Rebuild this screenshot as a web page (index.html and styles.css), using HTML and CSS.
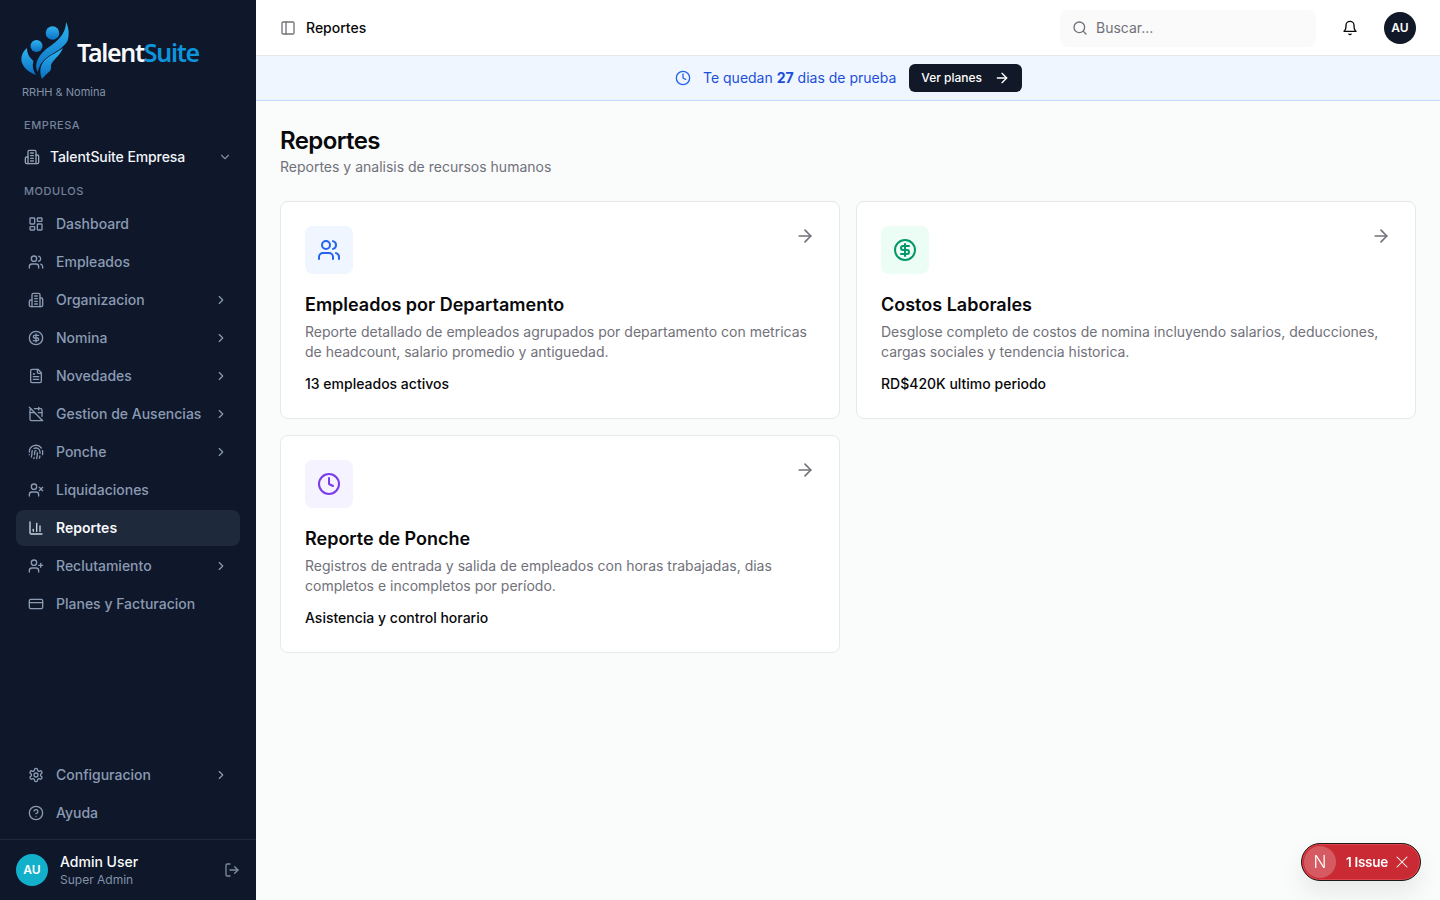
FILE: index.html
```html
<!DOCTYPE html>
<html lang="es">
<head>
  <meta charset="UTF-8">
  <meta name="viewport" content="width=device-width, initial-scale=1.0">
  <title>Reportes - TalentSuite</title>
  <link rel="stylesheet" href="styles.css">
</head>
<body>
  <!-- Icon sprite -->
  <svg class="sprite" xmlns="http://www.w3.org/2000/svg">
    <symbol id="i-dashboard" viewBox="0 0 24 24"><rect x="3" y="3" width="7" height="9" rx="1"/><rect x="14" y="3" width="7" height="5" rx="1"/><rect x="14" y="12" width="7" height="9" rx="1"/><rect x="3" y="16" width="7" height="5" rx="1"/></symbol>
    <symbol id="i-users" viewBox="0 0 24 24"><path d="M16 21v-2a4 4 0 0 0-4-4H6a4 4 0 0 0-4 4v2"/><circle cx="9" cy="7" r="4"/><path d="M22 21v-2a4 4 0 0 0-3-3.87"/><path d="M16 3.13a4 4 0 0 1 0 7.75"/></symbol>
    <symbol id="i-building" viewBox="0 0 24 24"><path d="M6 22V4a2 2 0 0 1 2-2h8a2 2 0 0 1 2 2v18Z"/><path d="M6 12H4a2 2 0 0 0-2 2v6a2 2 0 0 0 2 2h2"/><path d="M18 9h2a2 2 0 0 1 2 2v9a2 2 0 0 1-2 2h-2"/><path d="M10 6h4"/><path d="M10 10h4"/><path d="M10 14h4"/><path d="M10 18h4"/></symbol>
    <symbol id="i-dollar" viewBox="0 0 24 24"><circle cx="12" cy="12" r="10"/><path d="M16 8h-6a2 2 0 1 0 0 4h4a2 2 0 1 1 0 4H8"/><path d="M12 18V6"/></symbol>
    <symbol id="i-file" viewBox="0 0 24 24"><path d="M15 2H6a2 2 0 0 0-2 2v16a2 2 0 0 0 2 2h12a2 2 0 0 0 2-2V7Z"/><path d="M14 2v4a2 2 0 0 0 2 2h4"/><path d="M10 9H8"/><path d="M16 13H8"/><path d="M16 17H8"/></symbol>
    <symbol id="i-calendar-off" viewBox="0 0 24 24"><path d="M4.2 4.2A2 2 0 0 0 3 6v14a2 2 0 0 0 2 2h14a2 2 0 0 0 1.82-1.18"/><path d="M21 15.5V6a2 2 0 0 0-2-2H9.5"/><path d="M16 2v4"/><path d="M3 10h7"/><path d="M21 10h-5.5"/><path d="m2 2 20 20"/></symbol>
    <symbol id="i-fingerprint" viewBox="0 0 24 24"><path d="M12 10a2 2 0 0 0-2 2c0 1.02-.1 2.51-.26 4"/><path d="M14 13.12c0 2.38 0 6.38-1 8.88"/><path d="M17.29 21.02c.12-.6.43-2.3.5-3.02"/><path d="M2 12a10 10 0 0 1 18-6"/><path d="M2 16h.01"/><path d="M21.8 16c.2-2 .131-5.354 0-6"/><path d="M5 19.5C5.5 18 6 15 6 12a6 6 0 0 1 .34-2"/><path d="M8.65 22c.21-.66.45-1.32.57-2"/><path d="M9 6.8a6 6 0 0 1 9 5.2v2"/></symbol>
    <symbol id="i-user-x" viewBox="0 0 24 24"><path d="M16 21v-2a4 4 0 0 0-4-4H6a4 4 0 0 0-4 4v2"/><circle cx="9" cy="7" r="4"/><path d="m17 8 5 5"/><path d="m22 8-5 5"/></symbol>
    <symbol id="i-chart" viewBox="0 0 24 24"><path d="M3 3v16a2 2 0 0 0 2 2h16"/><path d="M18 17V9"/><path d="M13 17V5"/><path d="M8 17v-3"/></symbol>
    <symbol id="i-user-plus" viewBox="0 0 24 24"><path d="M16 21v-2a4 4 0 0 0-4-4H6a4 4 0 0 0-4 4v2"/><circle cx="9" cy="7" r="4"/><path d="M19 8v6"/><path d="M22 11h-6"/></symbol>
    <symbol id="i-card" viewBox="0 0 24 24"><rect x="2" y="5" width="20" height="14" rx="2"/><path d="M2 10h20"/></symbol>
    <symbol id="i-settings" viewBox="0 0 24 24"><path d="M12.22 2h-.44a2 2 0 0 0-2 2v.18a2 2 0 0 1-1 1.73l-.43.25a2 2 0 0 1-2 0l-.15-.08a2 2 0 0 0-2.73.73l-.22.38a2 2 0 0 0 .73 2.73l.15.1a2 2 0 0 1 1 1.72v.51a2 2 0 0 1-1 1.74l-.15.09a2 2 0 0 0-.73 2.73l.22.38a2 2 0 0 0 2.73.73l.15-.08a2 2 0 0 1 2 0l.43.25a2 2 0 0 1 1 1.73V20a2 2 0 0 0 2 2h.44a2 2 0 0 0 2-2v-.18a2 2 0 0 1 1-1.73l.43-.25a2 2 0 0 1 2 0l.15.08a2 2 0 0 0 2.73-.73l.22-.39a2 2 0 0 0-.73-2.73l-.15-.08a2 2 0 0 1-1-1.74v-.5a2 2 0 0 1 1-1.74l.15-.09a2 2 0 0 0 .73-2.73l-.22-.38a2 2 0 0 0-2.73-.73l-.15.08a2 2 0 0 1-2 0l-.43-.25a2 2 0 0 1-1-1.73V4a2 2 0 0 0-2-2z"/><circle cx="12" cy="12" r="3"/></symbol>
    <symbol id="i-help" viewBox="0 0 24 24"><circle cx="12" cy="12" r="10"/><path d="M9.09 9a3 3 0 0 1 5.83 1c0 2-3 3-3 3"/><path d="M12 17h.01"/></symbol>
    <symbol id="i-logout" viewBox="0 0 24 24"><path d="M9 21H5a2 2 0 0 1-2-2V5a2 2 0 0 1 2-2h4"/><path d="m16 17 5-5-5-5"/><path d="M21 12H9"/></symbol>
    <symbol id="i-panel" viewBox="0 0 24 24"><rect x="3" y="3" width="18" height="18" rx="2"/><path d="M9 3v18"/></symbol>
    <symbol id="i-search" viewBox="0 0 24 24"><circle cx="11" cy="11" r="8"/><path d="m21 21-4.3-4.3"/></symbol>
    <symbol id="i-bell" viewBox="0 0 24 24"><path d="M6 8a6 6 0 0 1 12 0c0 7 3 9 3 9H3s3-2 3-9"/><path d="M10.3 21a1.94 1.94 0 0 0 3.4 0"/></symbol>
    <symbol id="i-clock" viewBox="0 0 24 24"><circle cx="12" cy="12" r="10"/><path d="M12 6v6l4 2"/></symbol>
    <symbol id="i-arrow" viewBox="0 0 24 24"><path d="M5 12h14"/><path d="m12 5 7 7-7 7"/></symbol>
    <symbol id="i-right" viewBox="0 0 24 24"><path d="m9 18 6-6-6-6"/></symbol>
    <symbol id="i-down" viewBox="0 0 24 24"><path d="m6 9 6 6 6-6"/></symbol>
    <symbol id="i-x" viewBox="0 0 24 24"><path d="M18 6 6 18"/><path d="m6 6 12 12"/></symbol>
  </svg>

  <div class="app">
    <aside class="sidebar">
      <div class="brand">
        <div class="logo">
          <svg class="logo-mark" viewBox="20 21 52 60">
            <defs>
              <linearGradient id="logo-grad" x1="0" y1="0" x2="0" y2="1">
                <stop offset="0" stop-color="#2fb4f0"/>
                <stop offset="1" stop-color="#0a70c4"/>
              </linearGradient>
            </defs>
            <circle cx="52.5" cy="33" r="6.8" fill="url(#logo-grad)"/>
            <circle cx="36.5" cy="46" r="6" fill="url(#logo-grad)"/>
            <path fill="url(#logo-grad)" d="M27 48C21 53 20 60 23 65C26 71 32 73 36 75C33 70 32 66 33.500 61C30 58 27 54 27 48Z"/>
            <path fill="url(#logo-grad)" d="M66 22C66 31 61 38 53 44C46 49 39 54 36.500 63C35.500 67 36.500 70 38 72C39 64 45 58 52 54C58 50.500 64 47 67.500 41C69.500 35 69 28 66 22Z"/>
            <path fill="url(#logo-grad)" d="M63 48C58 52 50 55 45 60C40 65 39 72 42 79C44 76 47 74 50 71C52 68 50 66 52 63C55 58.500 60 55 63 48Z"/>
          </svg>
          <span class="logo-text">Talent<span class="logo-accent">Suite</span></span>
        </div>
        <p class="brand-sub">RRHH &amp; Nomina</p>
      </div>

      <div class="section-label section-empresa">EMPRESA</div>
      <div class="company">
        <svg class="icon"><use href="#i-building"/></svg>
        <span class="company-name">TalentSuite Empresa</span>
        <svg class="chev"><use href="#i-down"/></svg>
      </div>

      <div class="section-label section-modulos">MODULOS</div>
      <nav class="nav">
        <a class="nav-item"><svg class="icon"><use href="#i-dashboard"/></svg><span>Dashboard</span></a>
        <a class="nav-item"><svg class="icon"><use href="#i-users"/></svg><span>Empleados</span></a>
        <a class="nav-item"><svg class="icon"><use href="#i-building"/></svg><span>Organizacion</span><svg class="chev"><use href="#i-right"/></svg></a>
        <a class="nav-item"><svg class="icon"><use href="#i-dollar"/></svg><span>Nomina</span><svg class="chev"><use href="#i-right"/></svg></a>
        <a class="nav-item"><svg class="icon"><use href="#i-file"/></svg><span>Novedades</span><svg class="chev"><use href="#i-right"/></svg></a>
        <a class="nav-item"><svg class="icon"><use href="#i-calendar-off"/></svg><span>Gestion de Ausencias</span><svg class="chev"><use href="#i-right"/></svg></a>
        <a class="nav-item"><svg class="icon"><use href="#i-fingerprint"/></svg><span>Ponche</span><svg class="chev"><use href="#i-right"/></svg></a>
        <a class="nav-item"><svg class="icon"><use href="#i-user-x"/></svg><span>Liquidaciones</span></a>
        <a class="nav-item active"><svg class="icon"><use href="#i-chart"/></svg><span>Reportes</span></a>
        <a class="nav-item"><svg class="icon"><use href="#i-user-plus"/></svg><span>Reclutamiento</span><svg class="chev"><use href="#i-right"/></svg></a>
        <a class="nav-item"><svg class="icon"><use href="#i-card"/></svg><span>Planes y Facturacion</span></a>
      </nav>

      <nav class="nav nav-bottom">
        <a class="nav-item"><svg class="icon"><use href="#i-settings"/></svg><span>Configuracion</span><svg class="chev"><use href="#i-right"/></svg></a>
        <a class="nav-item"><svg class="icon"><use href="#i-help"/></svg><span>Ayuda</span></a>
      </nav>

      <div class="user">
        <div class="user-avatar">AU</div>
        <div class="user-info">
          <div class="user-name">Admin User</div>
          <div class="user-role">Super Admin</div>
        </div>
        <svg class="icon logout"><use href="#i-logout"/></svg>
      </div>
    </aside>

    <div class="content">
      <header class="topbar">
        <svg class="icon panel-toggle"><use href="#i-panel"/></svg>
        <span class="crumb">Reportes</span>
        <div class="search">
          <svg class="icon"><use href="#i-search"/></svg>
          <span>Buscar...</span>
        </div>
        <svg class="icon bell"><use href="#i-bell"/></svg>
        <div class="top-avatar">AU</div>
      </header>

      <div class="trial">
        <svg class="icon"><use href="#i-clock"/></svg>
        <span>Te quedan <strong>27</strong> dias de prueba</span>
        <a class="trial-btn">Ver planes <svg class="icon"><use href="#i-arrow"/></svg></a>
      </div>

      <main class="main">
        <h1>Reportes</h1>
        <p class="subtitle">Reportes y analisis de recursos humanos</p>

        <div class="cards">
          <article class="card">
            <div class="card-head">
              <div class="card-icon blue"><svg><use href="#i-users"/></svg></div>
              <svg class="card-arrow"><use href="#i-arrow"/></svg>
            </div>
            <h3>Empleados por Departamento</h3>
            <p class="card-desc">Reporte detallado de empleados agrupados por departamento con metricas de headcount, salario promedio y antiguedad.</p>
            <p class="card-meta">13 empleados activos</p>
          </article>

          <article class="card">
            <div class="card-head">
              <div class="card-icon green"><svg><use href="#i-dollar"/></svg></div>
              <svg class="card-arrow"><use href="#i-arrow"/></svg>
            </div>
            <h3>Costos Laborales</h3>
            <p class="card-desc">Desglose completo de costos de nomina incluyendo salarios, deducciones, cargas sociales y tendencia historica.</p>
            <p class="card-meta">RD$420K ultimo periodo</p>
          </article>

          <article class="card">
            <div class="card-head">
              <div class="card-icon purple"><svg><use href="#i-clock"/></svg></div>
              <svg class="card-arrow"><use href="#i-arrow"/></svg>
            </div>
            <h3>Reporte de Ponche</h3>
            <p class="card-desc">Registros de entrada y salida de empleados con horas trabajadas, dias completos e incompletos por período.</p>
            <p class="card-meta">Asistencia y control horario</p>
          </article>
        </div>
      </main>
    </div>
  </div>

  <!-- Dev indicator -->
  <div class="issue-pill">
    <span class="issue-n">N</span>
    <span class="issue-text">1 Issue</span>
    <svg class="issue-x"><use href="#i-x"/></svg>
  </div>
</body>
</html>
```

FILE: styles.css
```css
* {
  box-sizing: border-box;
}

body {
  margin: 0;
  font-family: Inter, "Liberation Sans", sans-serif;
  font-size: 14px;
  line-height: 20px;
  color: #09090b;
  background: #fafbfb;
}

.sprite {
  display: none;
}

.icon,
.chev,
.card-arrow,
.card-icon svg,
.issue-x {
  fill: none;
  stroke: currentColor;
  stroke-width: 2;
  stroke-linecap: round;
  stroke-linejoin: round;
  flex-shrink: 0;
}

.icon {
  width: 16px;
  height: 16px;
}

.app {
  display: flex;
  height: 900px;
  overflow: hidden;
}

/* Sidebar */
.sidebar {
  width: 256px;
  flex-shrink: 0;
  display: flex;
  flex-direction: column;
  background: #0f172a;
  color: #94a3b8;
}

.brand {
  height: 104px;
  padding: 21px 0 0 20px;
}

.logo {
  display: flex;
  align-items: center;
  height: 60px;
}

.logo-mark {
  width: 52px;
  height: 60px;
  flex-shrink: 0;
}

.logo-text {
  margin: 2px 0 0 5px;
  font-family: "Noto Sans", sans-serif;
  font-size: 25px;
  font-weight: 600;
  letter-spacing: -1.3px;
  color: #f8fafc;
}

.logo-accent {
  color: #0e94dc;
}

.brand-sub {
  margin: 3px 0 0 2px;
  font-size: 11px;
  line-height: 16px;
  color: #8292a8;
}

.section-label {
  padding: 0 24px;
  font-size: 11px;
  line-height: 16px;
  font-weight: 500;
  letter-spacing: 0.55px;
  color: #74839a;
}

.section-empresa {
  margin-top: 13px;
}

.section-modulos {
  margin-top: 8px;
}

.company {
  display: flex;
  align-items: center;
  gap: 10px;
  height: 36px;
  margin-top: 6px;
  padding: 0 24px;
  font-weight: 500;
  letter-spacing: -0.1px;
  color: #f1f5f9;
}

.company .icon {
  color: #94a3b8;
}

.company-name {
  flex: 1;
}

.company .chev {
  color: #7d8ca3;
}

.chev {
  width: 14px;
  height: 14px;
}

.nav {
  display: flex;
  flex-direction: column;
  gap: 2px;
  padding: 0 16px;
  margin-top: 7px;
}

.nav-bottom {
  margin-top: auto;
  padding-bottom: 8px;
}

.nav-item {
  display: flex;
  align-items: center;
  gap: 12px;
  height: 36px;
  padding: 0 12px;
  border-radius: 8px;
  font-weight: 500;
  color: #8a9bb3;
}

.nav-item span {
  flex: 1;
  white-space: nowrap;
}

.nav-item .chev {
  color: #8a9bb3;
}

.nav-item.active {
  background: #1e293b;
  color: #f8fafc;
  font-weight: 600;
}

.nav-item.active .icon {
  color: #cbd5e1;
}

.user {
  display: flex;
  align-items: center;
  gap: 12px;
  height: 61px;
  padding: 0 16px;
  border-top: 1px solid #1e293b;
}

.user-avatar {
  width: 32px;
  height: 32px;
  border-radius: 50%;
  display: flex;
  align-items: center;
  justify-content: center;
  background: #12b0ca;
  color: #fff;
  font-size: 12px;
  font-weight: 600;
}

.user-info {
  flex: 1;
  padding-top: 2px;
}

.user-name {
  font-weight: 500;
  line-height: 18px;
  color: #f8fafc;
}

.user-role {
  font-size: 12px;
  line-height: 18px;
  color: #8292a8;
}

.logout {
  color: #7d8ca3;
}

/* Content */
.content {
  flex: 1;
  min-width: 0;
  display: flex;
  flex-direction: column;
}

.topbar {
  height: 56px;
  flex-shrink: 0;
  display: flex;
  align-items: center;
  padding: 0 24px;
  background: #fff;
  border-bottom: 1px solid #e7e8ea;
}

.panel-toggle {
  color: #71717a;
  margin-right: 10px;
}

.crumb {
  flex: 1;
  font-weight: 500;
}

.search {
  width: 256px;
  height: 37px;
  display: flex;
  align-items: center;
  gap: 8px;
  padding: 0 12px;
  margin: 1px 26px 0 0;
  border-radius: 8px;
  background: #fafafa;
  color: #71717a;
}

.bell {
  color: #09090b;
  margin-right: 26px;
}

.top-avatar {
  width: 32px;
  height: 32px;
  border-radius: 50%;
  display: flex;
  align-items: center;
  justify-content: center;
  background: #111827;
  color: #fff;
  font-size: 12px;
  font-weight: 600;
}

.trial {
  height: 45px;
  flex-shrink: 0;
  display: flex;
  align-items: center;
  justify-content: center;
  gap: 12px;
  padding-left: 1px;
  background: #eff6ff;
  border-bottom: 1px solid #bfdbfe;
  color: #1d4ed8;
}

.trial .icon {
  color: #2563eb;
}

.trial strong {
  font-weight: 700;
}

.trial-btn {
  display: flex;
  align-items: center;
  gap: 8px;
  height: 28px;
  margin-left: 1px;
  padding: 0 12px;
  border-radius: 6px;
  background: #111827;
  color: #fff;
  font-size: 12px;
  font-weight: 500;
}

.trial-btn .icon {
  width: 16px;
  height: 16px;
  margin-left: 4px;
  color: #fff;
}

.main {
  flex: 1;
  padding: 24px;
}

h1 {
  margin: 0;
  font-size: 24px;
  line-height: 32px;
  font-weight: 600;
  letter-spacing: -0.6px;
}

.subtitle {
  margin: 0 0 24px;
  color: #71717a;
}

.cards {
  display: grid;
  grid-template-columns: 1fr 1fr;
  gap: 16px;
}

.card {
  padding: 24px;
  background: #fff;
  border: 1px solid #e7e8ea;
  border-radius: 8px;
}

.card-head {
  display: flex;
  justify-content: space-between;
  align-items: flex-start;
}

.card-icon {
  width: 48px;
  height: 48px;
  border-radius: 8px;
  display: flex;
  align-items: center;
  justify-content: center;
}

.card-icon svg {
  width: 24px;
  height: 24px;
}

.card-icon.blue {
  background: #eff6ff;
  color: #2563eb;
}

.card-icon.green {
  background: #ecfdf5;
  color: #059669;
}

.card-icon.purple {
  background: #f5f3ff;
  color: #7c3aed;
}

.card-arrow {
  width: 20px;
  height: 20px;
  color: #71717a;
}

.card h3 {
  margin: 17px 0 3px;
  font-size: 18px;
  line-height: 28px;
  font-weight: 600;
}

.card-desc {
  margin: 0;
  color: #71717a;
}

.card-meta {
  margin: 12px 0 0;
  font-weight: 500;
}

/* Dev indicator, floats over the page */
.issue-pill {
  position: fixed;
  right: 19px;
  bottom: 19px;
  width: 120px;
  height: 38px;
  display: flex;
  align-items: center;
  padding: 0 8px 0 2px;
  border-radius: 19px;
  background: #c92a33;
  border: 1px solid #1a1a1a;
  box-shadow: inset 0 0 0 1px #e0444c, 0 12px 24px rgba(0, 0, 0, 0.08);
  color: #fff;
}

.issue-n {
  width: 32px;
  height: 32px;
  border-radius: 50%;
  display: flex;
  align-items: center;
  justify-content: center;
  background: #d65a62;
  font-size: 17px;
  font-weight: 300;
}

.issue-text {
  flex: 1;
  margin-left: 10px;
  font-size: 13.5px;
  font-weight: 600;
  letter-spacing: -0.3px;
}

.issue-x {
  width: 20px;
  height: 20px;
  stroke-width: 1.25;
}
```
